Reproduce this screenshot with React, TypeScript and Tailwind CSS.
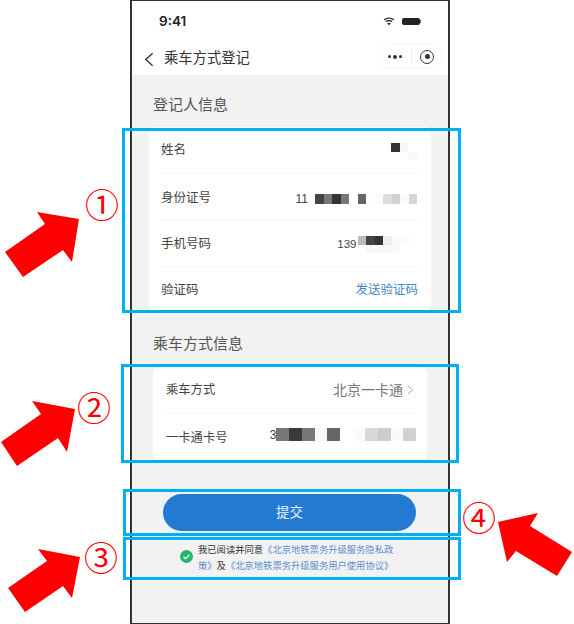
const idCells = ["bg-[#444]", "bg-[#777]", "bg-[#333]", "bg-[#777]", "bg-white", "bg-[#666]", "bg-white", "bg-[#fafafa]", "bg-[#ddd]", "bg-[#d0d0d0]", "bg-[#fafafa]", "bg-[#d5d5d5]"];
const cardCells = ["bg-[#777]", "bg-[#3a3a3a]", "bg-[#777]", "bg-[#f7f7fa]", "bg-[#666]", "bg-white", "bg-[#fafafc]", "bg-[#d8d8d8]", "bg-[#ccc]", "bg-[#fafafa]", "bg-[#d0d0d0]"];
const phoneTop = ["bg-[#bbb]", "bg-[#444]", "bg-[#333]", "bg-[#eee]", "bg-[#fafafa]", "bg-[#fcfcfc]", "bg-white"];
const phoneBottom = ["bg-white", "bg-[#f8f8f8]", "bg-[#f8f8f8]", "bg-[#f8f8f8]", "bg-[#fafafa]", "bg-white", "bg-white"];
const nameTop = ["bg-[#333]", "bg-[#f7f7f7]", "bg-white"];
const nameBottom = ["bg-white", "bg-[#fdfdfd]", "bg-[#f9f9f9]"];

function Cells({ cells, size }: { cells: string[]; size: string }) {
  return (
    <div className="flex">
      {cells.map((c, i) => (
        <div key={i} className={`${size} ${c}`} />
      ))}
    </div>
  );
}

function Row({ label, children, border = true, className }: { label: string; children: React.ReactNode; border?: boolean; className: string }) {
  return (
    <div className={`flex items-center justify-between ${border ? "border-b border-[#f6f6f6]" : ""} ${className}`}>
      <span className="text-[12.5px] text-[#444]">{label}</span>
      {children}
    </div>
  );
}

function Arrow({ points }: { points: string }) {
  return <polygon points={points} fill="#ff0000" />;
}

function Callout({ className, children }: { className: string; children: string }) {
  return <span className={`absolute font-['Noto_Sans_CJK_SC'] text-[34px] leading-none text-[#ff0000] ${className}`}>{children}</span>;
}

export default function App() {
  return (
    <div className="relative h-[624px] w-[574px] overflow-hidden bg-white font-['Liberation_Sans','Noto_Sans_CJK_SC',sans-serif]">
      <div className="ml-[130px] flex h-[624px] w-[320px] flex-col border-x-2 border-y border-[#333] bg-[#f2f2f2]">
        <div className="bg-white">
          <div className="flex h-[37px] items-center justify-between pl-[27px] pr-[27px] pt-[4px]">
            <span className="font-['Inter',sans-serif] text-[13.5px] font-semibold text-[#222]">9:41</span>
            <div className="flex items-center gap-[7px]">
              <svg width="12" height="9" viewBox="0 0 14 11" fill="#222">
                <path d="M7 2.2c2.1 0 4 .8 5.4 2.2l1-1.1C11.7 1.6 9.4.6 7 .6S2.3 1.6.6 3.3l1 1.1C3 3 4.900 2.200 7 2.200z" />
                <path d="M7 5.200c1.300 0 2.400.5 3.300 1.300l1-1.100C10.100 4.300 8.600 3.700 7 3.700s-3.100.6-4.300 1.700l1 1.100C4.600 5.700 5.700 5.200 7 5.200z" />
                <path d="M7 6.900c-.9 0-1.600.3-2.200.8L7 10.200l2.200-2.500C8.600 7.200 7.900 6.900 7 6.900z" />
              </svg>
              <div className="flex items-center">
                <div className="h-[7px] w-[18px] rounded-[2px] bg-[#222]" />
                <div className="h-[3px] w-[1px] bg-[#666]" />
              </div>
            </div>
          </div>
          <div className="flex h-[37px] items-center justify-between pl-[12px] pr-[5px]">
            <div className="mt-[5px] flex items-center gap-[10px]">
              <svg width="10" height="15" viewBox="0 0 11 16" fill="none" stroke="#333" strokeWidth="1.500">
                <path d="M9.500 1 2 8l7.500 7" />
              </svg>
              <span className="text-[14.300px] text-[#333]">乘车方式登记</span>
            </div>
            <div className="flex h-[25px] w-[66px] items-center rounded-full border border-[#f8f8f8]">
              <div className="flex w-[33px] items-center justify-center gap-[2px]">
                <div className="size-[3px] rounded-full bg-[#333]" />
                <div className="size-[4px] rounded-full bg-[#333]" />
                <div className="size-[3px] rounded-full bg-[#333]" />
              </div>
              <div className="h-[15px] w-px bg-[#eee]" />
              <div className="flex flex-1 items-center justify-center">
                <div className="flex size-[14px] items-center justify-center rounded-full border-[1.500px] border-[#333]">
                  <div className="size-[5px] rounded-full bg-[#333]" />
                </div>
              </div>
            </div>
          </div>
        </div>

        <div className="flex h-[52px] items-center pl-[21px] pt-[9px] text-[15px] text-[#555]">登记人信息</div>
        <div className="ml-[17px] w-[282px] rounded-md bg-white pl-[12px] pr-[13px]">
          <Row label="姓名" className="h-[47px]">
            <div className="mr-[1.500px] mt-[3px]">
              <Cells cells={nameTop} size="h-[8.500px] w-[8.500px]" />
              <Cells cells={nameBottom} size="h-[8.500px] w-[8.500px]" />
            </div>
          </Row>
          <Row label="身份证号" className="h-[47px] pt-[3px]">
            <div className="flex items-center">
              <span className="mr-[7px] text-[12px] text-[#444]">11</span>
              <Cells cells={idCells} size="h-[10px] w-[8.500px]" />
              <div className="w-[1px]" />
            </div>
          </Row>
          <Row label="手机号码" className="h-[46px] pt-[2px]">
            <div className="mr-[1px] flex items-center">
              <span className="mr-[1px] text-[11.500px] text-[#444]">139</span>
              <div>
                <Cells cells={phoneTop} size="h-[8.500px] w-[8.500px]" />
                <Cells cells={phoneBottom} size="h-[8.500px] w-[8.500px]" />
              </div>
            </div>
          </Row>
          <Row label="验证码" border={false} className="h-[43px] pt-[3px]">
            <span className="text-[12.500px] text-[#3f86c6]">发送验证码</span>
          </Row>
        </div>

        <div className="flex h-[57px] items-center pl-[21px] pt-[12px] text-[15px] text-[#555]">乘车方式信息</div>
        <div className="ml-[21px] w-[274px] rounded-md bg-white pl-[13px] pr-[13px]">
          <div className="flex h-[47px] items-center justify-between border-b border-[#f6f6f6]">
            <span className="text-[12.300px] text-[#444]">乘车方式</span>
            <div className="flex items-center gap-[4px]">
              <span className="text-[14px] text-[#777]">北京一卡通</span>
              <svg width="7" height="10" viewBox="0 0 7 10" fill="none" stroke="#aaa" strokeWidth="1">
                <path d="M1 1l4.500 4L1 9" />
              </svg>
            </div>
          </div>
          <div className="flex h-[47px] items-center justify-between pt-[2px]">
            <span className="text-[12.300px] text-[#444]">一卡通卡号</span>
            <div className="-mr-[2px] -mt-[8px] flex items-center">
              <span className="text-[12px] text-[#444]">3</span>
              <Cells cells={cardCells} size="h-[13px] w-[12.700px]" />
            </div>
          </div>
        </div>

        <button className="ml-[31px] mt-[33px] h-[37px] w-[253px] rounded-full bg-[#227bd0] pt-[1px] text-[13.500px] text-[#e8f1fa]">提交</button>
        <div className="ml-[48px] mt-[11px] flex items-center gap-[5px]">
          <svg width="13" height="13" viewBox="0 0 13 13" className="-mt-[3px] shrink-0">
            <circle cx="6.500" cy="6.500" r="6.500" fill="#22b66e" />
            <path d="M3.500 6.700 5.600 8.700 9.500 4.800" fill="none" stroke="#fff" strokeWidth="1.200" />
          </svg>
          <div className="whitespace-nowrap text-[9.300px] leading-[16px] text-[#333]">
            <p>
              我已阅读并同意<span className="text-[#5d90cf]">《北京地铁票务升级服务隐私政</span>
            </p>
            <p className="text-[#5d90cf]">
              策》<span className="text-[#333]">及</span>《北京地铁票务升级服务用户使用协议》
            </p>
          </div>
        </div>
      </div>

      {/* annotation overlay */}
      <div className="absolute left-[122px] top-[128px] h-[185px] w-[339px] border-[3px] border-[#00b0f0]" />
      <div className="absolute left-[121px] top-[364px] h-[99px] w-[338px] border-[3px] border-[#00b0f0]" />
      <div className="absolute left-[123px] top-[489px] h-[47px] w-[338px] border-[3px] border-[#00b0f0]" />
      <div className="absolute left-[123px] top-[537px] h-[43px] w-[338px] border-[3px] border-[#00b0f0]" />

      <svg className="absolute left-0 top-0" width="574" height="624">
        <Arrow points="79,219 37,212 45,224 5,252 23,277 63,250 72,262" />
        <Arrow points="75,409 32,401 41,414 1,442 17,466 58,438 67,452" />
        <Arrow points="80,557 38,549 47,561 8,588 25,612 63,586 72,598" />
        <Arrow points="498,522 538,513 530,526 572,552 557,576 516,551 507,562" />
      </svg>
      <Callout className="left-[85px] top-[187px]">①</Callout>
      <Callout className="left-[77px] top-[390px]">②</Callout>
      <Callout className="left-[84px] top-[540px]">③</Callout>
      <Callout className="left-[462px] top-[500px]">④</Callout>
    </div>
  );
}
